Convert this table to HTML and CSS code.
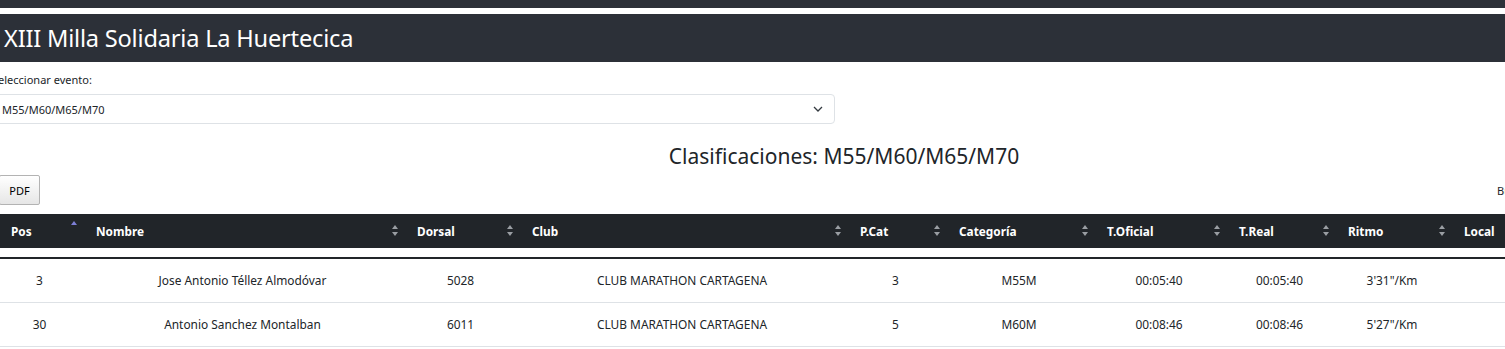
FILE: index.html
```html
<!DOCTYPE html>
<html lang="es">
<head>
<meta charset="utf-8">
<title>XIII Milla Solidaria La Huertecica</title>
<link rel="stylesheet" href="styles.css">
</head>
<body>
<div class="topbar"></div>
<header class="site">
  <h1 class="site-title">XIII Milla Solidaria La Huertecica</h1>
</header>
<main class="content">
  <label class="ev-label" for="ev">Seleccionar evento:</label>
  <div class="select">
    <span class="select-value">M55/M60/M65/M70</span>
    <svg class="chev" width="10" height="6" viewBox="0 0 10 6"><path d="M1 1l4 4 4-4" fill="none" stroke="#343a40" stroke-width="1.3"/></svg>
  </div>
  <h2 class="clasif">Clasificaciones: M55/M60/M65/M70</h2>
  <div class="toolbar">
    <button class="btn-pdf">PDF</button>
    <span class="search">Buscar:</span>
  </div>
  <div class="table-wrap">
    <table class="res head">
      <colgroup>
        <col style="width:85px"><col style="width:321px"><col style="width:115px"><col style="width:328px"><col style="width:99px"><col style="width:148px"><col style="width:132px"><col style="width:109px"><col style="width:116px"><col style="width:120px">
      </colgroup>
      <thead>
        <tr>
          <th><span>Pos</span><i class="sort asc"></i></th>
          <th><span>Nombre</span><i class="sort"></i></th>
          <th><span>Dorsal</span><i class="sort"></i></th>
          <th><span>Club</span><i class="sort"></i></th>
          <th><span>P.Cat</span><i class="sort"></i></th>
          <th><span>Categoría</span><i class="sort"></i></th>
          <th><span>T.Oficial</span><i class="sort"></i></th>
          <th><span>T.Real</span><i class="sort"></i></th>
          <th><span>Ritmo</span><i class="sort"></i></th>
          <th><span>Local</span><i class="sort"></i></th>
        </tr>
      </thead>
    </table>
    <table class="res body">
      <colgroup>
        <col style="width:85px"><col style="width:321px"><col style="width:115px"><col style="width:328px"><col style="width:99px"><col style="width:148px"><col style="width:132px"><col style="width:109px"><col style="width:116px"><col style="width:120px">
      </colgroup>
      <tbody>
        <tr>
          <td>3</td><td>Jose Antonio Téllez Almodóvar</td><td>5028</td><td>CLUB MARATHON CARTAGENA</td><td>3</td><td>M55M</td><td>00:05:40</td><td>00:05:40</td><td>3'31"/Km</td><td></td>
        </tr>
        <tr>
          <td>30</td><td>Antonio Sanchez Montalban</td><td>6011</td><td>CLUB MARATHON CARTAGENA</td><td>5</td><td>M60M</td><td>00:08:46</td><td>00:08:46</td><td>5'27"/Km</td><td></td>
        </tr>
      </tbody>
    </table>
  </div>
</main>
</body>
</html>
```
FILE: styles.css
```css
html, body {
  margin: 0;
  padding: 0;
  overflow: hidden;
  background: #fff;
}
body {
  font-family: "Noto Sans", "Open Sans", sans-serif;
  color: #212529;
  width: 1505px;
}
.topbar {
  height: 8px;
  background: #2c3038;
  margin-bottom: 6px;
}
.site {
  background: #2c3038;
  height: 48px;
  display: flex;
  align-items: center;
}
.site-title {
  margin: 0 0 0 4px;
  font-weight: 400;
  font-size: 23.6px;
  color: #fff;
  letter-spacing: -0.2px;
}
.content {
  display: flex;
  flex-direction: column;
}
.ev-label {
  font-size: 11px;
  margin: 10px 0 0 -8px;
  line-height: 16px;
}
.select {
  margin: 6px 0 0 -12px;
  width: 847px;
  height: 30px;
  box-sizing: border-box;
  border: 1px solid #dee2e6;
  border-radius: 4px;
  display: flex;
  align-items: center;
  justify-content: space-between;
  padding: 0 11px 0 13px;
}
.select-value {
  font-size: 11px;
}
.clasif {
  margin: 18px 0 0 0;
  font-weight: 400;
  font-size: 21px;
  line-height: 28px;
  text-align: center;
  padding-left: 183px;
}
.toolbar {
  display: flex;
  justify-content: space-between;
  align-items: center;
  margin-top: 5px;
  height: 30px;
}
.btn-pdf {
  font-family: inherit;
  font-size: 11px;
  color: #000;
  height: 30px;
  width: 41px;
  margin-left: -1px;
  border: 1px solid #b3b3b3;
  border-radius: 2px;
  background: linear-gradient(#ffffff, #e6e6e6);
  padding: 0;
}
.search {
  font-size: 11px;
  margin-right: -40px;
  width: 48px;
}
.table-wrap {
  margin-top: 9px;
}
.res {
  border-collapse: collapse;
  table-layout: fixed;
  width: 1573px;
  font-size: 12px;
}
.head thead tr {
  background: #212529;
  color: #fff;
  height: 34px;
}
.head th {
  position: relative;
  text-align: left;
  padding: 0 10px 0 11px;
  font-weight: 700;
  font-size: 11.8px;
  white-space: nowrap;
}
.sort {
  position: absolute;
  right: 8px;
  top: 50%;
  width: 6px;
  height: 11px;
  margin-top: -6px;
}
.sort::before, .sort::after {
  content: "";
  position: absolute;
  left: 0;
  border-left: 3px solid transparent;
  border-right: 3px solid transparent;
}
.sort::before {
  top: 0;
  border-bottom: 4px solid #9a9ea3;
}
.sort::after {
  bottom: 0;
  border-top: 4px solid #9a9ea3;
}
.sort.asc {
  margin-top: -10px;
}
.sort.asc::before {
  border-bottom-color: #7d7fd6;
}
.sort.asc::after {
  display: none;
}
.body {
  margin-top: 9px;
  border-top: 2px solid #212529;
}
.body td {
  height: 44px;
  padding: 0 11px 0 5px;
  text-align: center;
  border-bottom: 1px solid #dee2e6;
  white-space: nowrap;
  box-sizing: border-box;
  font-size: 11.9px;
}
```
